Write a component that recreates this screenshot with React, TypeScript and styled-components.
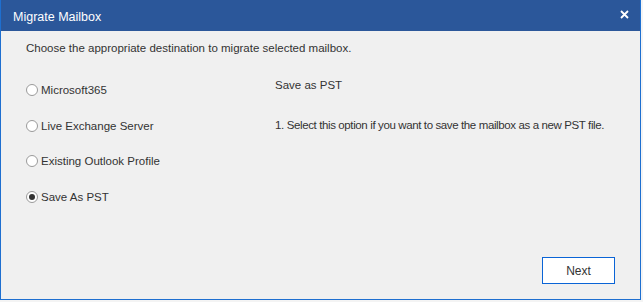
import styled, { createGlobalStyle } from "styled-components";

const GlobalStyle = createGlobalStyle`
  html, body {
    margin: 0;
    padding: 0;
    background: #f4f4f4;
  }
  body {
    font-family: "Liberation Sans", Arial, sans-serif;
    font-size: 11.5px;
    color: #333;
  }
`;

const Window = styled.div`
  width: 641px;
  height: 300px;
  box-sizing: border-box;
  border: 1px solid #1e6fd0;
  border-top: none;
  background: #f0f0f0;
  display: flex;
  flex-direction: column;
`;

const TitleBar = styled.div`
  height: 31px;
  flex: none;
  background: #2b579a;
  color: #fff;
  display: flex;
  align-items: center;
  justify-content: space-between;
  padding: 2px 10px 0 12px;
  box-sizing: border-box;
  font-size: 12.5px;
`;

const CloseButton = styled.div`
  width: 12px;
  height: 12px;
  display: flex;
  align-items: center;
  justify-content: center;
  margin-top: -4px;
`;

const Body = styled.div`
  flex: 1;
  display: flex;
  flex-direction: column;
  padding: 11px 25px 15px 25px;
`;

const Heading = styled.div`
  color: #333;
  margin-bottom: 19px;
`;

const Columns = styled.div`
  flex: 1;
  display: grid;
  grid-template-columns: 249px 1fr;
`;

const OptionList = styled.div`
  display: flex;
  flex-direction: column;
  gap: 21.5px;
  padding-top: 10px;
`;

const Option = styled.label`
  display: flex;
  align-items: center;
  gap: 3px;
  height: 14px;
  color: #333;
`;

const RadioCircle = styled.span<{ $checked?: boolean }>`
  width: 12px;
  height: 12px;
  box-sizing: border-box;
  border: 1px solid #9a9a9a;
  border-radius: 50%;
  background: #fff;
  display: inline-flex;
  align-items: center;
  justify-content: center;
  &::after {
    content: "";
    width: 6px;
    height: 6px;
    border-radius: 50%;
    background: ${(p) => (p.$checked ? "#333" : "transparent")};
  }
`;

const Detail = styled.div`
  display: flex;
  flex-direction: column;
  gap: 28px;
  padding-top: 6px;
`;

const DetailTitle = styled.div`
  color: #333;
`;

const DetailText = styled.div`
  color: #333;
  white-space: nowrap;
  letter-spacing: -0.38px;
`;

const Footer = styled.div`
  display: flex;
  justify-content: flex-end;
`;

const NextButton = styled.button`
  width: 73px;
  height: 27px;
  background: #fff;
  border: 1px solid #0a64d6;
  font-family: inherit;
  font-size: 12px;
  color: #333;
`;

const options = ["Microsoft365", "Live Exchange Server", "Existing Outlook Profile", "Save As PST"];

export default function App() {
  return (
    <>
      <GlobalStyle />
      <Window>
        <TitleBar>
          <span>Migrate Mailbox</span>
          <CloseButton>
            <svg width="9" height="9" viewBox="0 0 9 9">
              <path d="M1 1L8 8M8 1L1 8" stroke="#fff" strokeWidth="1.8" />
            </svg>
          </CloseButton>
        </TitleBar>
        <Body>
          <Heading>Choose the appropriate destination to migrate selected mailbox.</Heading>
          <Columns>
            <OptionList>
              {options.map((o) => (
                <Option key={o}>
                  <RadioCircle $checked={o === "Save As PST"} />
                  {o}
                </Option>
              ))}
            </OptionList>
            <Detail>
              <DetailTitle>Save as PST</DetailTitle>
              <DetailText>1. Select this option if you want to save the mailbox as a new PST file.</DetailText>
            </Detail>
          </Columns>
          <Footer>
            <NextButton>Next</NextButton>
          </Footer>
        </Body>
      </Window>
    </>
  );
}
